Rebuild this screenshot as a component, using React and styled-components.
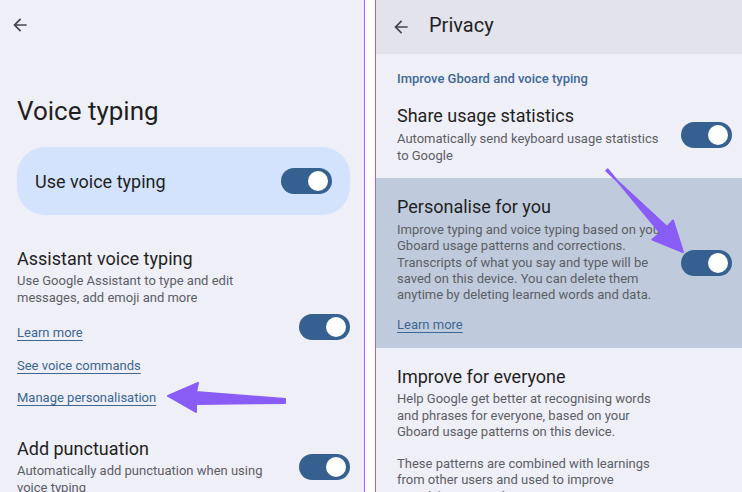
import React from "react";
import styled, { createGlobalStyle } from "styled-components";

const GlobalStyle = createGlobalStyle`
  html, body {
    margin: 0;
    padding: 0;
    background: #ffffff;
  }
  body {
    font-family: Roboto, "Noto Sans", sans-serif;
    color: #1f1f23;
  }
`;

const Page = styled.div`
  position: relative;
  display: flex;
  width: 742px;
  height: 492px;
  overflow: hidden;
  background: #ffffff;
`;

const Panel = styled.div`
  display: flex;
  flex-direction: column;
  background: #efeff7;
  overflow: hidden;
  & > * {
    flex-shrink: 0;
  }
  ${({ side }) =>
    side === "left"
      ? "width: 364px; border-right: 1.5px solid #a95ff3;"
      : "flex: 1; border-left: 1.5px solid #a95ff3;"}
`;

const Gap = styled.div`
  width: 10px;
  flex-shrink: 0;
  background: #ffffff;
`;

const TopBar = styled.div`
  display: flex;
  align-items: center;
  gap: 18px;
  height: ${({ tall }) => (tall ? "54px" : "50px")};
  padding: 0 0 0 ${({ tall }) => (tall ? "15px" : "10px")};
  background: ${({ shaded }) => (shaded ? "#e3e3eb" : "transparent")};
`;

const BackIcon = styled.svg`
  width: 20px;
  height: 20px;
  fill: #44464f;
`;

const BarTitle = styled.div`
  font-size: 20px;
  color: #1f1f23;
  margin-top: -4px;
`;

const PageTitle = styled.h1`
  margin: 44px 0 0 17px;
  font-size: 26px;
  font-weight: 400;
  line-height: 34px;
  color: #1f1f23;
`;

const MainCard = styled.div`
  display: flex;
  align-items: center;
  justify-content: space-between;
  margin: 19px 14px 0 17px;
  height: 68px;
  padding: 0 18px;
  border-radius: 28px;
  background: #d3e3fd;
  font-size: 18px;
  color: #1f1f23;
`;

const Item = styled.div`
  display: flex;
  align-items: ${({ align }) => align || "center"};
  justify-content: space-between;
  padding: ${({ pad }) => pad || "0 14px 0 17px"};
  margin-top: ${({ top }) => top || 0}px;
  background: ${({ highlight }) => (highlight ? "#bfcbdc" : "transparent")};
`;

const TextCol = styled.div`
  display: flex;
  flex-direction: column;
`;

const ItemTitle = styled.div`
  font-size: 18px;
  line-height: 26px;
  color: #1f1f23;
`;

const ItemDesc = styled.div`
  font-size: 13px;
  line-height: ${({ lh }) => lh || 17}px;
  margin-top: ${({ top }) => top || 0}px;
  color: #5c5e66;
`;

const Link = styled.a`
  display: block;
  font-size: 13px;
  line-height: 18px;
  color: #3d6794;
  text-decoration: underline;
  text-underline-offset: 3px;
  margin-top: ${({ top }) => top || 0}px;
`;

const SectionLabel = styled.div`
  font-size: 13px;
  font-weight: 500;
  color: #3d6a9b;
  padding-left: 21px;
  margin-top: 17px;
`;

const Track = styled.div`
  width: 51px;
  height: 26px;
  border-radius: 13px;
  background: #35608f;
  display: flex;
  align-items: center;
  justify-content: flex-end;
  padding-right: 4px;
  box-sizing: border-box;
  flex-shrink: 0;
`;

const Thumb = styled.div`
  width: 20px;
  height: 20px;
  border-radius: 50%;
  background: #ffffff;
`;

const Overlay = styled.svg`
  position: absolute;
  left: 0;
  top: 0;
  width: 742px;
  height: 492px;
  pointer-events: none;
`;

const Toggle = ({ style }) => (
  <Track style={style}>
    <Thumb />
  </Track>
);

const Back = () => (
  <BackIcon viewBox="0 0 24 24">
    <path d="M20 11H7.83l5.59-5.59L12 4l-8 8 8 8 1.41-1.41L7.83 13H20v-2z" />
  </BackIcon>
);

const Lines = ({ lines }) =>
  lines.map((l, i) => (
    <React.Fragment key={i}>
      {l}
      {i < lines.length - 1 && <br />}
    </React.Fragment>
  ));

export default function App() {
  return (
    <>
      <GlobalStyle />
      <Page>
        <Panel side="left">
          <TopBar>
            <Back />
          </TopBar>
          <PageTitle>Voice typing</PageTitle>
          <MainCard>
            <span>Use voice typing</span>
            <Toggle />
          </MainCard>

          <Item top={31} align="flex-end">
            <TextCol>
              <ItemTitle>Assistant voice typing</ItemTitle>
              <ItemDesc>
                <Lines
                  lines={[
                    "Use Google Assistant to type and edit",
                    "messages, add emoji and more",
                  ]}
                />
              </ItemDesc>
              <Link top={18}>Learn more</Link>
            </TextCol>
            <Toggle style={{ marginBottom: 2 }} />
          </Item>
          <Item>
            <Link top={15}>See voice commands</Link>
          </Item>
          <Item>
            <Link top={14}>Manage personalisation</Link>
          </Item>

          <Item top={29}>
            <TextCol>
              <ItemTitle>Add punctuation</ItemTitle>
              <ItemDesc>
                <Lines
                  lines={[
                    "Automatically add punctuation when using",
                    "voice typing",
                  ]}
                />
              </ItemDesc>
            </TextCol>
            <Toggle style={{ marginTop: 2 }} />
          </Item>
        </Panel>

        <Gap />

        <Panel side="right">
          <TopBar tall shaded>
            <Back />
            <BarTitle>Privacy</BarTitle>
          </TopBar>
          <SectionLabel>Improve Gboard and voice typing</SectionLabel>

          <Item top={17} pad="0 10px 0 21px">
            <TextCol>
              <ItemTitle>Share usage statistics</ItemTitle>
              <ItemDesc top={1}>
                <Lines
                  lines={[
                    "Automatically send keyboard usage statistics",
                    "to Google",
                  ]}
                />
              </ItemDesc>
            </TextCol>
            <Toggle style={{ marginTop: 2 }} />
          </Item>

          <Item highlight top={14} pad="16px 10px 14px 21px">
            <TextCol>
              <ItemTitle>Personalise for you</ItemTitle>
              <ItemDesc lh={16.3} top={2}>
                <Lines
                  lines={[
                    "Improve typing and voice typing based on your",
                    "Gboard usage patterns and corrections.",
                    "Transcripts of what you say and type will be",
                    "saved on this device. You can delete them",
                    "anytime by deleting learned words and data.",
                  ]}
                />
              </ItemDesc>
              <Link top={13}>Learn more</Link>
            </TextCol>
            <Toggle style={{ marginTop: -2 }} />
          </Item>

          <Item top={16} pad="0 10px 0 21px" align="flex-start">
            <TextCol>
              <ItemTitle>Improve for everyone</ItemTitle>
              <ItemDesc lh={16.4} top={1}>
                <Lines
                  lines={[
                    "Help Google get better at recognising words",
                    "and phrases for everyone, based on your",
                    "Gboard usage patterns on this device.",
                  ]}
                />
              </ItemDesc>
              <ItemDesc lh={16.4} top={15}>
                <Lines
                  lines={[
                    "These patterns are combined with learnings",
                    "from other users and used to improve",
                    "Google's voice and typing services.",
                  ]}
                />
              </ItemDesc>
            </TextCol>
          </Item>
        </Panel>

        <Overlay viewBox="0 0 742 492">
          <polygon
            points="168,396 198,383 196,392 285,399 285,403 196,404 196,412"
            fill="#8a5cf6"
            stroke="#8a5cf6"
            strokeWidth="2"
            strokeLinejoin="round"
          />
          <polygon
            points="606.3,170.7 667,227 673,220.5 683,252 652.4,239.5 660.5,233 607.7,169.3"
            fill="#8a5cf6"
            stroke="#8a5cf6"
            strokeWidth="2"
            strokeLinejoin="round"
          />
        </Overlay>
      </Page>
    </>
  );
}
